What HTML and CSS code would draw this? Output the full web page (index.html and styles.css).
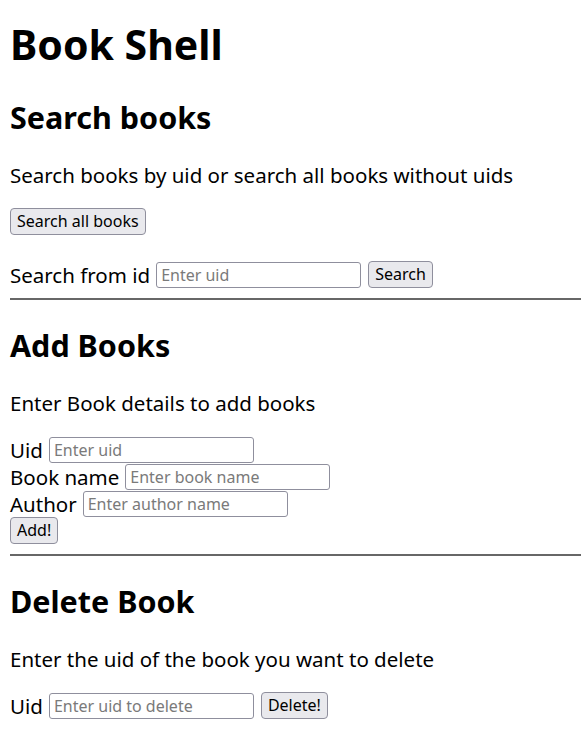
FILE: index.html
```html
<!DOCTYPE html>
<html>
<head>
<meta charset="utf-8">
<title>Book Shell</title>
<link rel="stylesheet" href="styles.css">
</head>
<body>
<h1 class="title">Book Shell</h1>

<section class="section first">
  <h2 class="heading">Search books</h2>
  <p class="desc">Search books by uid or search all books without uids</p>
  <button class="btn btn-all">Search all books</button>
  <div class="row row-search">
    <label class="lbl">Search from id</label>
    <input class="field" type="text" placeholder="Enter uid">
    <button class="btn">Search</button>
  </div>
</section>
<hr class="rule">

<section class="section">
  <h2 class="heading">Add Books</h2>
  <p class="desc">Enter Book details to add books</p>
  <div class="stack">
    <div class="row"><label class="lbl">Uid</label><input class="field" type="text" placeholder="Enter uid"></div>
    <div class="row"><label class="lbl">Book name</label><input class="field" type="text" placeholder="Enter book name"></div>
    <div class="row"><label class="lbl">Author</label><input class="field" type="text" placeholder="Enter author name"></div>
    <div class="row"><button class="btn">Add!</button></div>
  </div>
</section>
<hr class="rule">

<section class="section">
  <h2 class="heading">Delete Book</h2>
  <p class="desc">Enter the uid of the book you want to delete</p>
  <div class="row row-delete">
    <label class="lbl">Uid</label>
    <input class="field" type="text" placeholder="Enter uid to delete">
    <button class="btn">Delete!</button>
  </div>
</section>
</body>
</html>
```
FILE: styles.css
```css
html, body {
  background: #ffffff;
}
body {
  margin: 0;
  padding: 19px 0 0 10px;
  font-family: "Noto Sans", "Open Sans", sans-serif;
  color: #000;
}
.title {
  margin: 0;
  font-size: 41px;
  line-height: 50px;
  font-weight: 700;
}
.section {
  display: flex;
  flex-direction: column;
  align-items: flex-start;
}
.heading {
  margin: 26px 0 0 0;
  font-size: 30.5px;
  line-height: 38px;
  font-weight: 700;
}
.first .heading {
  margin-top: 29px;
}
.desc {
  margin: 26px 0 0 0;
  font-size: 20.5px;
  line-height: 26px;
}
.btn {
  font-family: "Noto Sans", "Open Sans", sans-serif;
  font-size: 16px;
  height: 27px;
  padding: 0 6px;
  background: #e9e9ed;
  border: 1px solid #8f8f9d;
  border-radius: 4px;
  color: #000;
  line-height: 25px;
}
.btn-all {
  margin-top: 20px;
}
.row {
  display: flex;
  align-items: center;
  height: 27px;
}
.row-search {
  margin-top: 26px;
}
.row-delete {
  margin-top: 20px;
}
.stack {
  margin-top: 20px;
  display: flex;
  flex-direction: column;
}
.lbl {
  font-size: 20.5px;
  margin-right: 6px;
}
.field {
  box-sizing: border-box;
  width: 205px;
  height: 26px;
  border: 1px solid #8f8f9d;
  border-radius: 3px;
  padding: 0 4px;
  font-family: "Noto Sans", "Open Sans", sans-serif;
  font-size: 16px;
  margin-right: 7px;
}
.field::placeholder {
  color: #7a7a7a;
}
.rule {
  margin: 10px 0 0 0;
  border: 0;
  border-top: 2px solid #676767;
  height: 0;
}
```
